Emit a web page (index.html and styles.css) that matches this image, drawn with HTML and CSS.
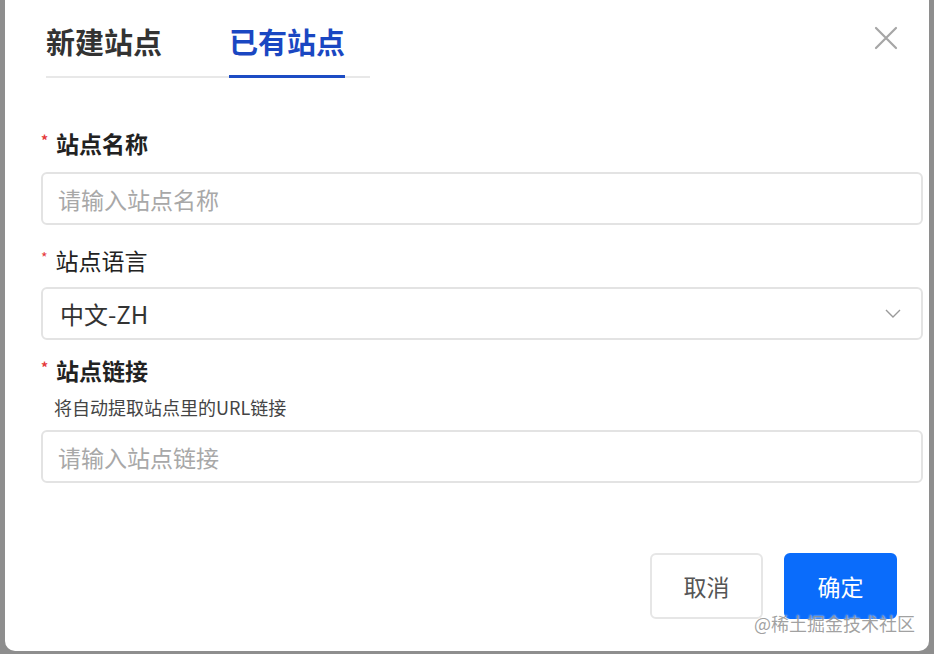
FILE: index.html
```html
<!DOCTYPE html>
<html lang="zh-CN">
<head>
    <meta charset="UTF-8">
    <meta name="viewport" content="width=device-width, initial-scale=1.0">
    <title>添加站点</title>
    <link rel="stylesheet" href="styles.css">
</head>
<body>
    <div class="modal">
        <div class="modal-head">
            <div class="tabs">
                <div class="tab">新建站点</div>
                <div class="tab active">已有站点</div>
            </div>
            <button class="close" type="button" aria-label="关闭">
                <svg width="24" height="24" viewBox="0 0 24 24">
                    <path d="M2 2 L22 22 M22 2 L2 22" stroke="#a6a6a6" stroke-width="2.2" stroke-linecap="round" fill="none"/>
                </svg>
            </button>
        </div>

        <form class="form" action="#">
            <div class="field">
                <label class="label bold" for="site-name"><span class="req">*</span>站点名称</label>
                <input class="input" type="text" id="site-name" placeholder="请输入站点名称">
            </div>

            <div class="field lang">
                <label class="label" for="site-lang"><span class="req">*</span>站点语言</label>
                <div class="select" id="site-lang">
                    <span>中文-ZH</span>
                    <svg width="16" height="9" viewBox="0 0 16 9">
                        <path d="M1 1 L8 8 L15 1" stroke="#9a9a9a" stroke-width="1.4" fill="none"/>
                    </svg>
                </div>
            </div>

            <div class="field link">
                <label class="label bold" for="site-url"><span class="req">*</span>站点链接</label>
                <p class="help">将自动提取站点里的URL链接</p>
                <input class="input" type="text" id="site-url" placeholder="请输入站点链接">
            </div>
        </form>

        <div class="modal-foot">
            <button class="btn" type="button">取消</button>
            <button class="btn primary" type="button">确定</button>
        </div>

        <div class="watermark">@稀土掘金技术社区</div>
    </div>
</body>
</html>
```

FILE: styles.css
```css
body {
    margin: 0;
    background-color: #8e8e8e;
    font-family: "Noto Sans CJK SC", "Noto Sans", sans-serif;
}

.modal {
    position: relative;
    height: 651px;
    margin: 0 5px 3px 5px;
    padding: 0 6px 0 36px;
    background-color: white;
    border-radius: 0 0 10px 10px;
    box-sizing: border-box;
}

.modal-head {
    display: flex;
    align-items: flex-start;
    margin-left: 5px;
}

.tabs {
    display: flex;
    gap: 67px;
    padding-right: 25px;
    border-bottom: 2px solid #e8e8e8;
}

.tab {
    padding: 21px 0 15px 0;
    font-size: 29px;
    line-height: 40px;
    font-weight: bold;
    color: #333;
}

.tab.active {
    color: #1a47c2;
    margin-bottom: -2px;
    border-bottom: 3px solid #1d4cc4;
    padding-bottom: 14px;
}

.close {
    margin: 26px 25px 0 auto;
    padding: 0;
    border: none;
    background: none;
    line-height: 0;
    cursor: pointer;
}

.form {
    display: flex;
    flex-direction: column;
    gap: 19px;
    padding-top: 49px;
}

.field {
    display: flex;
    flex-direction: column;
}

.field.lang .label {
    margin-bottom: 11px;
}

.field.link {
    margin-top: -5px;
}

.label {
    display: flex;
    align-items: center;
    margin-bottom: 13px;
    font-size: 23px;
    line-height: 32px;
    color: #222;
}

.label.bold {
    font-weight: bold;
}

.req {
    margin-right: 8px;
    margin-top: -6px;
    font-size: 14px;
    line-height: 14px;
    color: #e5383b;
}

.help {
    margin: -3px 0 12px 13px;
    font-size: 18px;
    line-height: 22px;
    color: #444;
}

.input, .select {
    height: 53px;
    padding: 0 15px;
    border: 2px solid #e3e3e3;
    border-radius: 6px;
    font-family: inherit;
    font-size: 23px;
    color: #333;
    background-color: white;
    box-sizing: border-box;
    outline: none;
}

.input::placeholder {
    color: #a8a8a8;
}

.select {
    display: flex;
    align-items: center;
    justify-content: space-between;
    padding-left: 17px;
    padding-right: 20px;
    font-size: 24px;
}

.modal-foot {
    display: flex;
    justify-content: flex-end;
    gap: 21px;
    padding: 70px 26px 0 0;
}

.btn {
    width: 113px;
    height: 66px;
    border: 2px solid #e6e6e6;
    border-radius: 6px;
    background-color: white;
    font-family: inherit;
    font-size: 23px;
    color: #555;
    cursor: pointer;
}

.btn.primary {
    border-color: #0a6cfb;
    background-color: #0a6cfb;
    color: white;
}

.watermark {
    position: absolute;
    right: 14px;
    bottom: 16px;
    font-size: 18px;
    line-height: 24px;
    color: rgba(130, 130, 130, 0.75);
    text-shadow: 0 0 2px white;
}
```
